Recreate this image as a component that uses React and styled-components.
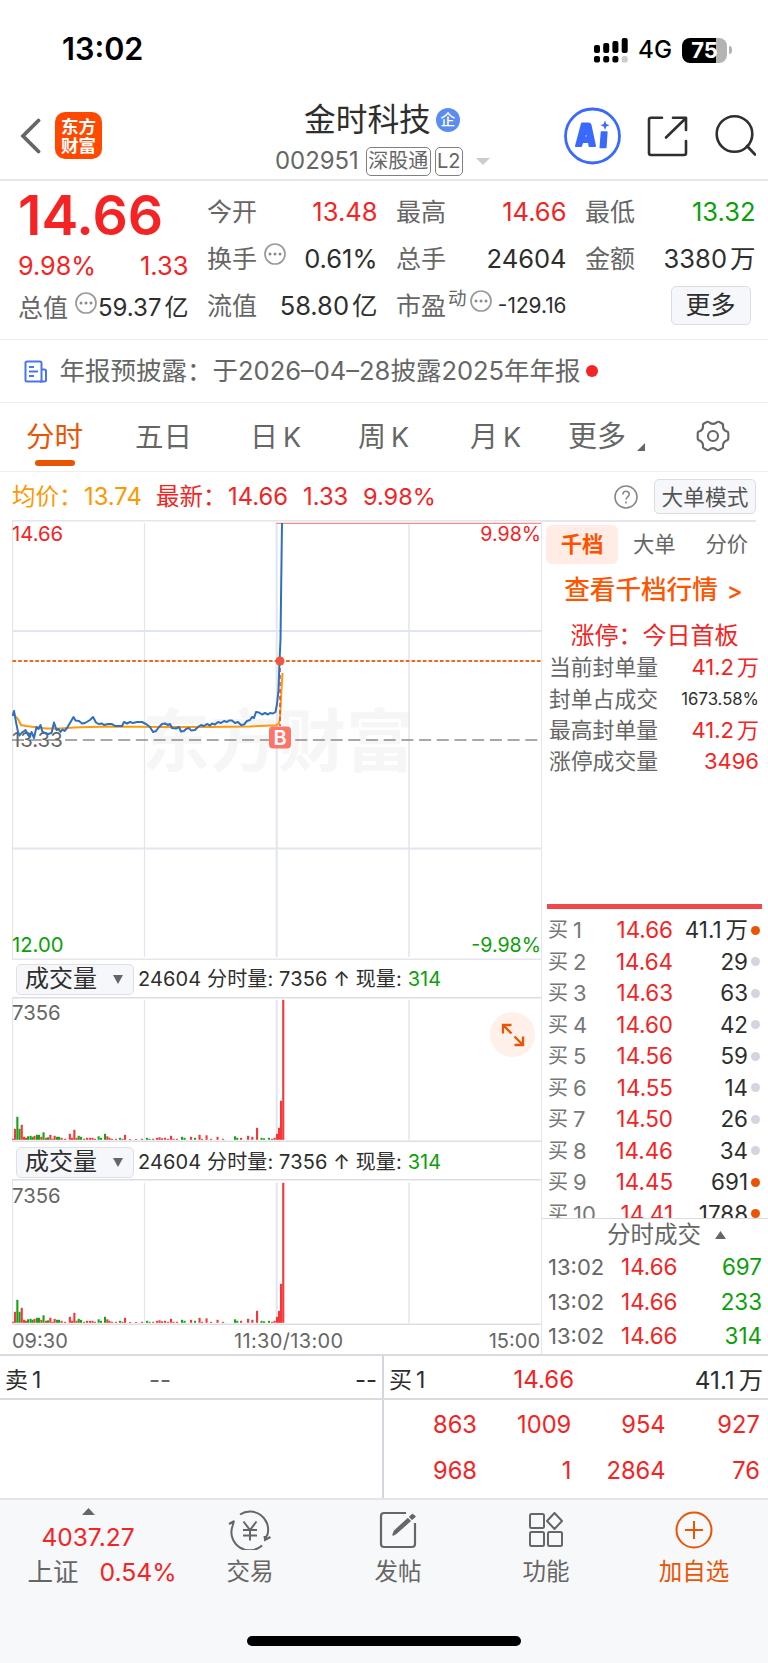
import React from "react";
import styled, { createGlobalStyle } from "styled-components";

const RED = "#f52323";
const GREEN = "#0aa00a";
const ORANGE = "#ea5504";
const GREY = "#666";
const DARK = "#2e2e2e";
const LINE = "#e4e6ec";

const Global = createGlobalStyle`
  * { box-sizing: border-box; }
  body {
    margin: 0;
    background: #fff;
    color: ${DARK};
    font-family: "Inter", "Noto Sans CJK SC", sans-serif;
    font-weight: 380;
  }
  svg { display: block; flex: none; }
`;

const Page = styled.div`
  width: 768px;
  height: 1663px;
  display: flex;
  flex-direction: column;
  overflow: hidden;
  background: #fff;
`;

const Txt = styled.span`
  display: block;
  white-space: pre;
  flex: none;
  font-size: ${(p) => p.$s || 24}px;
  line-height: ${(p) => p.$lh || 30}px;
  color: ${(p) => p.$c || "inherit"};
  font-weight: ${(p) => p.$w || 380};
  letter-spacing: ${(p) => p.$ls || 0}px;
`;

const Tail = styled.span`
  margin-left: ${(p) => p.$gap || 3}px;
  color: ${(p) => p.$c || "inherit"};
  font-size: ${(p) => (p.$s ? `${p.$s}px` : "inherit")};
`;

/* a figure whose counting unit is set off by a thin gap */
const Figure = ({ children, gap, ...rest }) => {
  const m = /^(.+)([万亿])$/.exec(children);
  return (
    <Txt {...rest}>
      {m ? m[1] : children}
      {m && <Tail $gap={gap}>{m[2]}</Tail>}
    </Txt>
  );
};

/* status bar */
const StatusBar = styled.header`
  height: 98px;
  padding: 34px 36px 0 62px;
  display: flex;
  align-items: flex-start;
  color: #000;
`;
const StatusIcons = styled.div`
  margin-left: auto;
  display: flex;
  align-items: center;
  gap: 10px;
  padding-top: 1px;
`;
const Battery = styled.div`
  width: 45px;
  height: 25px;
  border-radius: 8px;
  background: linear-gradient(90deg, #000 75%, #b3b3b3 75%);
  color: #fff;
  display: flex;
  align-items: center;
  justify-content: center;
`;
const BatteryGroup = styled.div`
  display: flex;
  align-items: center;
  gap: 2px;
`;
const Nub = styled.i`
  width: 3px;
  height: 8px;
  border-radius: 0 4px 4px 0;
  background: #b3b3b3;
`;

/* title bar */
const TitleBar = styled.div`
  height: 83px;
  border-bottom: 2px solid #e8e8e8;
  display: grid;
  grid-template-columns: 258px 250px 1fr;
`;
const TitleLeft = styled.div`
  display: flex;
  align-items: center;
  padding: 0 0 6px 20px;
  gap: 14px;
`;
const Logo = styled.div`
  width: 47px;
  height: 47px;
  border-radius: 10px;
  background: #ff4800;
  color: #fff;
  display: flex;
  flex-direction: column;
  align-items: center;
  justify-content: center;
`;
const TitleMid = styled.div`
  display: flex;
  flex-direction: column;
  padding-top: 3px;
`;
const TitleLine = styled.div`
  display: flex;
  align-items: center;
  height: 38px;
  padding-left: 46px;
  gap: 5px;
`;
const Badge = styled.div`
  width: 24px;
  height: 24px;
  border-radius: 50%;
  background: #5b8cf0;
  color: #fff;
  display: flex;
  align-items: center;
  justify-content: center;
`;
const CodeLine = styled.div`
  display: flex;
  align-items: center;
  margin-top: 7px;
  padding-left: 17px;
  height: 30px;
  > svg { margin-left: 13px; }
`;
const Tag = styled.div`
  height: 29px;
  border: 1.5px solid #808080;
  border-radius: 5px;
  width: ${(p) => p.$w}px;
  margin-left: ${(p) => p.$ml}px;
  flex: none;
  display: flex;
  align-items: center;
  justify-content: center;
`;
const TitleRight = styled.div`
  display: flex;
  align-items: center;
  padding: 0 12px 5px 0;
  justify-content: flex-end;
`;

/* quote panel */
const Quote = styled.section`
  height: 159px;
  border-bottom: 1.5px solid #efeff1;
  padding: 7px 12px 0 18px;
  display: grid;
  grid-template-columns: repeat(4, 170.5px);
  column-gap: 18.5px;
`;
const QuoteCol = styled.div`
  display: flex;
  flex-direction: column;
`;
const QuoteRow = styled.div`
  height: ${(p) => p.$h || 47.3}px;
  display: flex;
  align-items: center;
  justify-content: space-between;
`;
const LabelGroup = styled.div`
  display: flex;
  align-items: center;
  svg { margin: 0 0 10px ${(p) => p.$gap ?? 6}px; }
  sup { font-size: 18.5px; line-height: 20px; margin: 0 -4px 17px 2px; color: ${GREY}; }
`;
const Btn = styled.button`
  border: 1.5px solid #dcdde3;
  background: #f6f7fa;
  border-radius: 5px;
  padding: 0;
  width: ${(p) => p.$w}px;
  height: ${(p) => p.$h}px;
  display: flex;
  align-items: center;
  justify-content: center;
  font-family: inherit;
`;
const ButtonRow = styled.div`
  height: 45px;
  display: flex;
  align-items: center;
  justify-content: flex-end;
  padding-right: 5px;
`;

/* notice */
const Notice = styled.div`
  height: 63px;
  border-bottom: 1.5px solid #efeff1;
  display: flex;
  align-items: center;
  padding-left: 24px;
`;
const NoticeText = styled(Txt)`
  margin-left: 12.5px;
`;
const RedDot = styled.i`
  width: 12px;
  height: 12px;
  margin-left: 5px;
  border-radius: 50%;
  background: ${RED};
`;

/* period tabs */
const Tabs = styled.nav`
  height: 69px;
  border-bottom: 1.5px solid #efeff1;
  display: flex;
  padding-left: 26px;
`;
const Tab = styled.div`
  width: ${(p) => p.$w}px;
  height: 100%;
  padding-top: ${(p) => p.$pt || 14}px;
  display: flex;
  flex-direction: column;
  color: ${(p) => (p.$on ? ORANGE : GREY)};
`;
const Underline = styled.i`
  width: 40px;
  height: 6px;
  margin: 3px 0 0 9px;
  border-radius: 3px;
  background: ${ORANGE};
`;
const MoreTab = styled.div`
  display: flex;
  align-items: flex-end;
  gap: 11px;
`;

/* average price row */
const AvgRow = styled.div`
  height: 49px;
  display: flex;
  align-items: center;
  padding: 0 12px 0 12px;
`;
const AvgPart = styled(Txt)`
  width: ${(p) => p.$wd}px;
`;
const AvgTools = styled.div`
  margin-left: auto;
  display: flex;
  align-items: center;
  gap: 16px;
`;

/* main area */
const Main = styled.div`
  display: flex;
  height: 834px;
  margin-top: -1px;
`;
const Left = styled.div`
  width: 542px;
  padding-left: 12px;
  border-right: 1.5px solid ${LINE};
  display: flex;
  flex-direction: column;
`;
const VolHead = styled.div`
  height: ${(p) => p.$h}px;
  display: flex;
  align-items: center;
  padding: ${(p) => p.$pt}px 0 0 4px;
  gap: 4px;
`;
const Select = styled.div`
  width: 118px;
  height: 31px;
  border: 1.5px solid #dfe0e5;
  border-radius: 5px;
  background: #f6f7fa;
  display: flex;
  align-items: center;
  justify-content: space-between;
  padding: 0 10px 0 8px;
`;
const VolWrap = styled.div`
  position: relative;
`;
const Expand = styled.div`
  position: absolute;
  right: 6px;
  top: 15px;
  width: 45px;
  height: 45px;
  border-radius: 50%;
  background: #fff0ea;
  display: flex;
  align-items: center;
  justify-content: center;
`;
const AxisRow = styled.div`
  height: 29px;
  display: grid;
  grid-template-columns: 222px 1fr auto;
  align-items: center;
  padding: 1px 1px 0 0;
  color: ${GREY};
`;

const Right = styled.aside`
  width: 226px;
  display: flex;
  flex-direction: column;
`;
const TopRule = styled.i`
  height: 1.5px;
  width: 214px;
  background: ${LINE};
`;
const DepthTabs = styled.div`
  display: flex;
  margin: 3px 0 0 4px;
  height: 39px;
  color: #555;
`;
const DepthTab = styled.div`
  width: ${(p) => (p.$on ? 72 : 72.5)}px;
  border-radius: 6px;
  background: ${(p) => (p.$on ? "#ffece4" : "transparent")};
  color: ${(p) => (p.$on ? "#ff5000" : "#666")};
  display: flex;
  align-items: center;
  justify-content: center;
`;
const Centered = styled.div`
  height: ${(p) => p.$h}px;
  display: flex;
  align-items: center;
  justify-content: center;
  padding: ${(p) => p.$pt || 0}px ${(p) => p.$pr || 0}px 0 0;
`;
const StatRow = styled.div`
  height: 31.4px;
  padding: 0 9px 0 7px;
  display: flex;
  align-items: center;
  justify-content: space-between;
`;
const RedBar = styled.i`
  height: 5px;
  width: 215px;
  margin: 126.5px 0 6px 5px;
  background: #ef4a4a;
`;
const Book = styled.div`
  height: 304px;
  overflow: hidden;
  border-bottom: 1.5px solid #d8dbe2;
`;
const BookRow = styled.div`
  height: 31.5px;
  display: grid;
  grid-template-columns: 25px 36px 64px 75px 13px;
  align-items: center;
  padding-left: 6px;
  > :nth-child(3), > :nth-child(4) { text-align: right; }
`;
const Dot = styled.i`
  width: 9px;
  height: 9px;
  margin-left: 3px;
  border-radius: 50%;
  background: ${(p) => (p.$hot ? ORANGE : "#d3d6de")};
`;
const TradesHead = styled.div`
  height: 31px;
  display: flex;
  align-items: center;
  gap: 14px;
  padding: 2px 0 0 65px;
`;
const TradeRow = styled.div`
  height: 34.5px;
  display: grid;
  grid-template-columns: 56px 73.5px 1fr;
  align-items: center;
  padding: 1px 6px 0 6px;
  > :not(:first-child) { text-align: right; }
`;

/* level-one strip */
const Strip = styled.div`
  height: 46px;
  border-top: 2px solid #d9dbe1;
  border-bottom: 2px solid #d9dbe1;
  display: grid;
  grid-template-columns: 384px 384px;
`;
const Side = styled.div`
  display: grid;
  grid-template-columns: ${(p) => p.$cols};
  align-items: center;
  padding: 6px 5px 0 5px;
  border-right: ${(p) => (p.$div ? "2px solid #d3d6df" : "0")};
  > :last-child { text-align: right; }
`;
const Queue = styled.div`
  height: 100px;
  display: grid;
  grid-template-columns: 384px 384px;
  border-bottom: 2px solid #e4e5e8;
`;
const QueueBlank = styled.div`
  border-right: 2px solid #d3d6df;
`;
const QueueGrid = styled.div`
  display: grid;
  grid-template-columns: 93px repeat(3, 94.3px);
  grid-auto-rows: 46px;
  align-items: center;
  padding-top: 2px;
  text-align: right;
`;

/* bottom navigation */
const Nav = styled.footer`
  flex: 1;
  background: #f7f8fa;
  display: flex;
  flex-direction: column;
  align-items: center;
  justify-content: space-between;
  padding-bottom: 17px;
`;
const NavItems = styled.div`
  width: 100%;
  display: grid;
  grid-template-columns: 176px repeat(4, 148px);
`;
const IndexBox = styled.div`
  display: flex;
  flex-direction: column;
  align-items: center;
  padding-top: 8px;
  > span { margin-top: 7px; }
`;
const IndexLine = styled.div`
  display: flex;
  gap: 21px;
  margin: 5px 0 0 28px;
`;
const NavItem = styled.div`
  display: flex;
  flex-direction: column;
  align-items: center;
  padding-top: 10px;
  gap: 7px;
  color: ${(p) => (p.$hot ? ORANGE : GREY)};
`;
const HomeBar = styled.i`
  width: 274px;
  height: 10px;
  border-radius: 5px;
  background: #000;
`;

const InfoIcon = () => (
  <svg width="22" height="22" viewBox="0 0 22 22">
    <circle cx="11" cy="11" r="10" fill="none" stroke="#999" strokeWidth="1.7" />
    {[6, 11, 16].map((x) => (
      <circle key={x} cx={x} cy="11" r="1.5" fill="#8a8a8a" />
    ))}
  </svg>
);

const SignalIcon = () => (
  <svg width="34" height="25" viewBox="0 0 34 25">
    <rect x="0" y="7" width="6" height="8" rx="2" />
    <rect x="9.2" y="5" width="6" height="10" rx="2" />
    <rect x="18.4" y="3" width="6" height="12" rx="2" />
    <rect x="27.7" y="0" width="6" height="15" rx="2" />
    <rect x="0" y="18" width="6" height="6.5" rx="2" />
    <rect x="9.2" y="18" width="6" height="6.5" rx="2" />
    <rect x="18.4" y="18" width="6" height="6.5" rx="2" />
    <rect x="27.7" y="18" width="6" height="6.5" rx="2" fill="#ccc" />
  </svg>
);

const TitleIcons = () => (
  <svg width="196" height="60" viewBox="0 0 196 60" fill="none">
    <circle cx="32.5" cy="30" r="27" stroke="#3a69ff" strokeWidth="2.8" />
    <path
      fill="#3a69ff"
      stroke="#3a69ff"
      strokeWidth="2"
      strokeLinejoin="round"
      fillRule="evenodd"
      d="M22 17.500H28.500Q30 17.500 30.500 19L35 40H29.500L29 36H22.500L21 40H16ZM26.500 25L24 31.500H28Z"
    />
    <path
      fill="#3a69ff"
      stroke="#3a69ff"
      strokeWidth="1.6"
      strokeLinejoin="round"
      d="M41.500 26H46.800L45.800 41.500H40.300Z"
    />
    <path fill="#3a69ff" d="M45 14.500L46.300 17.900L49.500 19.200L46.300 20.500L45 24L43.700 20.500L40.500 19.200L43.700 17.900Z" />
    <g stroke="#2f2f2f" strokeWidth="2.6" strokeLinecap="round" strokeLinejoin="round">
      <path d="M102 11.800H91Q89 11.800 89 13.800V47Q89 49 91 49H124Q126 49 126 47V35" />
      <path d="M113 11.800H126V24M125.500 12.500L106 31.500" />
      <circle cx="174.500" cy="28" r="17.800" />
      <path d="M187 40L195 48.500" />
    </g>
  </svg>
);

const GearIcon = () => (
  <svg width="34" height="34" viewBox="0 0 34 34" fill="none" stroke="#666" strokeWidth="2.1" strokeLinejoin="round">
    <path d="M11 2.800Q13 2.500 14 4Q17 5.700 20 4Q21 2.500 23 2.800L26 4.500Q27.600 5.500 26.900 7.300Q27.200 11.200 30.400 12.300Q32.300 12.600 32.300 14.500V19Q32.300 21.200 30.400 21.500Q27.200 22.800 26.900 26.500Q27.600 28.400 26 29.400L23 31Q21 31.500 20 30Q17 28.300 14 30Q13 31.500 11 31L8 29.400Q6.400 28.400 7.100 26.500Q6.800 22.800 3.600 21.500Q1.700 21.200 1.700 19V14.500Q1.700 12.600 3.600 12.300Q6.800 11.200 7.100 7.300Q6.400 5.500 8 4.500Z" />
    <circle cx="17" cy="17" r="5" />
  </svg>
);

const NoticeIcon = () => (
  <svg width="23" height="23" viewBox="0 0 23 23" fill="none" stroke="#4a72f5" strokeWidth="2">
    <path d="M3 1.500H16Q17.500 1.500 17.500 3V21.500H3Q1.500 21.500 1.500 20V3Q1.500 1.500 3 1.500Z" />
    <path d="M17.500 9.500H20.500Q22 9.500 22 11V20Q22 21.500 20.500 21.500H16" />
    <path d="M5 7H10M5 11.500H14M5 16H10" strokeWidth="1.800" />
  </svg>
);

const PRICE_POINTS =
  "12.5,716 14,711 16,722 18,732 19.500,735.500 21.500,733 25.500,730 27.500,734 29.500,737 31.500,732 34,738 36.500,727 38.500,729 40.500,725 42.500,732 48,734 51.500,733 54,722.500 56.500,730 58.500,729 60.500,732 62.500,729.500 64.500,731 67,728 70,723 73.500,717 75.500,720.500 79,721 82,723.500 85,723 90,720 93,717 96,722.500 98.500,724 102,723.500 104,725 108,724 112,724 115,726 122,726 124,722 127,723.500 130,722 133,723 137,722 142,722 146,724 150,727 153,732 156,731 159,727 162,724 165,723.500 168,725 170,724 172,728 176,728.500 179,727 181,731.500 184,731 186,729 189,728 191,730.500 195,730 198,727 201,725 204,726 207,724 210,725.500 212,723.500 215,724.500 218,722 221,723 224,721 227,722 229,720.500 232,720.500 235,723 238,722 241,725 244,724.500 247,721 250,720 252,717 254,718 256,712 259,712.500 262,714.500 265,713 268,714.500 270,713 273,713.500 275.500,712 277,704 278.500,690 279.500,661 280.500,640 281,600 282,523";
const AVG_POINTS =
  "15,716 18,719 21,725 26,726 34,727 46,728.500 60,728.500 74,727.500 90,727 110,726.500 160,727 210,727 250,726.500 270,725.500 276,725.500 279,723 280,718 281.500,690 282.500,673";

const vLines = (y1, y2) => (
  <g stroke="#e1e5ee">
    <path d={`M12.500 ${y1 - 3}V${y2 + 3}`} strokeWidth="1.200" />
    <path d={`M144.500 ${y1}V${y2}`} strokeWidth="1.200" />
    <path d={`M276.700 ${y1}V${y2}`} strokeWidth="2" />
    <path d={`M409 ${y1}V${y2}`} strokeWidth="1.500" />
  </g>
);

const ChartText = styled.text`
  font-size: ${(p) => (p.$end ? 19.6 : 20.3)}px;
  fill: ${(p) => p.$c};
  text-anchor: ${(p) => (p.$end ? "end" : "start")};
`;
const Watermark = styled.text`
  font-size: 68px;
  font-weight: 700;
  fill: #f6f6f7;
`;
const MarkerText = styled.text`
  font-size: 20px;
  font-weight: 600;
  fill: #fff;
  text-anchor: middle;
`;

const PriceChart = () => (
  <svg width="529" height="440" viewBox="12 520 529 440" fill="none">
    <Watermark x="142" y="766">东方财富</Watermark>
    <path d="M12 520.700H541M12 959.200H541" stroke={LINE} strokeWidth="1.500" />
    {vLines(523, 957)}
    <path d="M12 631H541M12 848.500H541" stroke="#e1e5ee" strokeWidth="1.800" />
    <path d="M276 523.300H541" stroke="#fb8a8a" strokeWidth="1.200" />
    <path d="M12 740H541" stroke="#8c8c8c" strokeWidth="1.700" strokeDasharray="12 5.700" />
    <ChartText x="12" y="746.500" $c="#666">13.33</ChartText>
    <path d="M12.500 661H541" stroke="#f0661c" strokeWidth="2" strokeDasharray="3.600 2.100" />
    <polyline points={AVG_POINTS} stroke="#ff9a0a" strokeWidth="2" />
    <path d="M280 661V726" stroke="#f5453a" strokeWidth="1.600" strokeDasharray="4 3" />
    <polyline points={PRICE_POINTS} stroke="#2e6fc0" strokeWidth="2" strokeLinejoin="round" />
    <circle cx="280" cy="661" r="4.500" fill="#f0553f" />
    <rect x="269" y="726.500" width="22" height="22" rx="4" fill="#ff7468" />
    <MarkerText x="280" y="744.800">B</MarkerText>
    <ChartText x="12" y="540.500" $c={RED}>14.66</ChartText>
    <ChartText x="541" y="540.500" $c={RED} $end>9.98%</ChartText>
    <ChartText x="12" y="952" $c={GREEN}>12.00</ChartText>
    <ChartText x="541" y="952" $c={GREEN} $end>-9.98%</ChartText>
  </svg>
);

/* [x, height, up] for every minute with visible volume */
const BARS = [
  [13, 1, 1], [15, 11, 1], [17.300, 23, 0], [19.500, 11, 0], [21.700, 15, 1], [24, 3, 1], [26, 2, 1], [28, 3.500, 0],
  [30.500, 4, 0], [32.500, 3, 0], [34.500, 4, 1], [37, 5, 0], [39, 5, 0], [41.300, 3, 1], [43.500, 7.500, 0], [46, 2, 1],
  [48, 2.500, 0], [50.300, 5, 1], [52.500, 1, 1], [54.600, 4, 1], [57, 3, 0], [59, 3, 0], [61.500, 2, 1], [65, 1, 1],
  [69.800, 6, 1], [72, 2, 1], [74.300, 10, 1], [76.500, 2, 1], [78.700, 4, 0], [81, 3, 0], [84, 1, 1], [87, 2, 1], [90, 2, 1],
  [92.500, 2, 1], [95, 1, 1], [98.600, 3.500, 0], [101, 2, 0], [105, 6, 0], [107.300, 3.500, 1], [109.500, 2, 1], [112, 1, 1],
  [116, 1, 1], [120, 2, 0], [122.500, 1, 1], [125, 5, 1], [130, .8, 1], [136, .8, 1], [142, 1, 1], [147, 2, 0], [149.500, 1, 0],
  [153, 1, 1], [157, 2, 1], [159.500, 2.500, 1], [162, 1.500, 1], [165, 2, 1], [168, 1, 1], [171, 4, 1], [173.500, 1, 1],
  [177, 1, 1], [182, 3, 0], [184.500, 2, 0], [191, 3, 1], [195, 2, 0], [199.500, 5, 1], [202, 1, 1], [206.500, 4.500, 1],
  [211, 1, 1], [217.500, 3, 1], [223, 1, 1], [235, 3.500, 0], [237.200, 2, 0], [241, 2, 1], [248, 4, 1], [252.300, 3, 1],
  [257, 12, 1], [261.500, 2, 0], [264, 1.500, 0], [269, 2, 0], [272, 1, 1], [274.500, 2, 1], [277, 6, 1], [279, 12, 1],
  [281, 39, 1], [283.200, 140, 1],
];

const VolumeChart = ({ h }) => (
  <svg width="529" height={h} viewBox={`12 ${1142.200 - h} 529 ${h}`}>
    <path d={`M12 ${1143 - h}H541M12 1141.400H541`} stroke="#dcdee4" strokeWidth="1.600" />
    {vLines(1000, 1140)}
    <ChartText x="12" y="1020" $c="#666">7356</ChartText>
    {BARS.map(([x, v, up]) => (
      <rect key={x} x={x - 1} y={1140 - v} width="2.100" height={v} fill={up ? "#f93636" : "#15a415"} />
    ))}
  </svg>
);

const Triangle = ({ w, h, up, c = "#666" }) => (
  <svg width={w} height={h} viewBox="0 0 10 10" preserveAspectRatio="none">
    <path d={up ? "M0 10L5 0L10 10Z" : "M0 0H10L5 10Z"} fill={c} />
  </svg>
);

const Green = styled.span`
  color: ${GREEN};
`;

const VolumeHeader = ({ h, pt }) => (
  <VolHead $h={h} $pt={pt}>
    <Select>
      <Txt $s={24}>成交量</Txt>
      <Triangle w={10} h={9} />
    </Select>
    <Txt $s={20} $ls={0.12}>
      24604 分时量: 7356 ↑ 现量: <Green>314</Green>
    </Txt>
  </VolHead>
);

const COLUMNS = [
  [
    { label: "今开", value: "13.48", c: RED },
    { label: "换手", value: "0.61%", info: true },
    { label: "流值", value: "58.80亿" },
  ],
  [
    { label: "最高", value: "14.66", c: RED },
    { label: "总手", value: "24604" },
    { label: "市盈", sup: "动", value: "-129.16", info: true, s: 20.800 },
  ],
  [
    { label: "最低", value: "13.32", c: GREEN },
    { label: "金额", value: "3380万" },
  ],
];

const STATS = [
  ["当前封单量", "41.2万", RED, 22],
  ["封单占成交", "1673.58%", DARK, 16.700],
  ["最高封单量", "41.2万", RED, 22],
  ["涨停成交量", "3496", RED, 22],
];

const BIDS = [
  ["14.66", "41.1万", 1], ["14.64", "29"], ["14.63", "63"], ["14.60", "42"], ["14.56", "59"],
  ["14.55", "14"], ["14.50", "26"], ["14.46", "34"], ["14.45", "691", 1], ["14.41", "1788", 1],
];

const QUEUE = ["863", "1009", "954", "927", "968", "1", "2864", "76"];

const TradeIcon = () => (
  <svg width="46" height="40" viewBox="0 0 46 40" fill="none" stroke="#666" strokeWidth="2">
    <path d="M13 4.500A18.200 18.200 0 0 1 40.500 24.500L38 29M43.500 27L38 30L37.500 26" />
    <path d="M35 35.500A18.200 18.200 0 0 1 5.500 16L7 11M2 14L7.500 11" />
    <path d="M16.500 11.500L23 20L29.500 11.500M16 20H30M16 25.500H30M23 20V30.500" />
  </svg>
);
const PostIcon = () => (
  <svg width="38" height="40" viewBox="0 0 38 40" fill="none" stroke="#666" strokeWidth="2.200">
    <path d="M27 3H5Q2 3 2 6V34Q2 37 5 37H33Q36 37 36 34V13" />
    <path d="M33.500 4.500L36 6.500L17.500 23L14 25L15.500 21Z" fill="#666" strokeLinejoin="round" strokeWidth="1.500" />
    <path d="M28.500 6.500L33 11" stroke="#f7f8fa" strokeWidth="1.300" />
  </svg>
);
const GridIcon = () => (
  <svg width="36" height="40" viewBox="0 0 36 40" fill="none" stroke="#666" strokeWidth="2">
    <rect x="2" y="4" width="14" height="14" rx="1.500" />
    <path d="M26.500 3L34 11L26.500 19L19 11Z" strokeLinejoin="round" />
    <rect x="2" y="22" width="14" height="14" rx="1.500" />
    <rect x="20" y="22" width="14" height="14" rx="1.500" />
  </svg>
);
const AddIcon = () => (
  <svg width="40" height="40" viewBox="0 0 40 40" fill="none" stroke={ORANGE} strokeWidth="2">
    <circle cx="20" cy="20" r="17.500" />
    <path d="M11 20H29M20 11V29" />
  </svg>
);

const NAV = [
  ["交易", TradeIcon],
  ["发帖", PostIcon],
  ["功能", GridIcon],
  ["加自选", AddIcon],
];

const KTab = ({ w, children }) => (
  <Tab $w={w}>
    <Txt $s={28} $lh={40}>
      {children}
      <Tail $gap={5} $s={27}>K</Tail>
    </Txt>
  </Tab>
);

export default function App() {
  return (
    <Page>
      <Global />
      <StatusBar>
        <Txt $s={30.600} $w={600}>13:02</Txt>
        <StatusIcons>
          <SignalIcon />
          <Txt $s={24.200} $w={480}>4G</Txt>
          <BatteryGroup>
            <Battery>
              <Txt $s={22} $w={700} $lh={25}>75</Txt>
            </Battery>
            <Nub />
          </BatteryGroup>
        </StatusIcons>
      </StatusBar>

      <TitleBar>
        <TitleLeft>
          <svg width="21" height="36" viewBox="0 0 21 36">
            <path d="M18.500 2.500L3 18L18.500 33.500" fill="none" stroke="#666" strokeWidth="3.800" strokeLinecap="round" />
          </svg>
          <Logo>
            <Txt $s={17.500} $lh={19} $w={700}>东方</Txt>
            <Txt $s={17.500} $lh={19} $w={700}>财富</Txt>
          </Logo>
        </TitleLeft>
        <TitleMid>
          <TitleLine>
            <Txt $s={31.700} $lh={38}>金时科技</Txt>
            <Badge>
              <Txt $s={15} $lh={20} $w={500}>企</Txt>
            </Badge>
          </TitleLine>
          <CodeLine>
            <Txt $s={23.900} $c={GREY}>002951</Txt>
            <Tag $w={65} $ml={7}>
              <Txt $s={20} $lh={26} $c={GREY}>深股通</Txt>
            </Tag>
            <Tag $w={28} $ml={4}>
              <Txt $s={20} $lh={26} $c={GREY}>L2</Txt>
            </Tag>
            <Triangle w={14} h={7} c="#ccc" />
          </CodeLine>
        </TitleMid>
        <TitleRight>
          <TitleIcons />
        </TitleRight>
      </TitleBar>

      <Quote>
        <QuoteCol>
          <QuoteRow $h={54}>
            <Txt $s={55.300} $lh={54} $w={600} $c={RED}>14.66</Txt>
          </QuoteRow>
          <QuoteRow $h={48}>
            <Txt $s={25.200} $c={RED}>9.98%</Txt>
            <Txt $s={25.500} $c={RED}>1.33</Txt>
          </QuoteRow>
          <QuoteRow $h={35}>
            <LabelGroup $gap={7}>
              <Txt $s={25} $c={GREY}>总值</Txt>
              <InfoIcon />
            </LabelGroup>
            <Figure $s={24} gap={3}>59.37亿</Figure>
          </QuoteRow>
        </QuoteCol>
        {COLUMNS.map((col, i) => (
          <QuoteCol key={i}>
            {col.map((r) => (
              <QuoteRow key={r.label}>
                <LabelGroup $gap={7}>
                  <Txt $s={25} $c={GREY}>{r.label}</Txt>
                  {r.sup && <sup>{r.sup}</sup>}
                  {r.info && <InfoIcon />}
                </LabelGroup>
                <Figure $s={r.s || 25.500} $c={r.c}>{r.value}</Figure>
              </QuoteRow>
            ))}
            {i === 2 && (
              <ButtonRow>
                <Btn $w={80} $h={39}>
                  <Txt $s={25} $c={DARK}>更多</Txt>
                </Btn>
              </ButtonRow>
            )}
          </QuoteCol>
        ))}
      </Quote>

      <Notice>
        <NoticeIcon />
        <NoticeText $s={25.500} $c={GREY}>年报预披露：于2026–04–28披露2025年年报</NoticeText>
        <RedDot />
      </Notice>

      <Tabs>
        <Tab $on $w={109}>
          <Txt $s={28.500} $lh={40}>分时</Txt>
          <Underline />
        </Tab>
        <Tab $w={115}><Txt $s={28.500} $lh={40}>五日</Txt></Tab>
        <KTab w={108}>日</KTab>
        <KTab w={112}>周</KTab>
        <KTab w={98}>月</KTab>
        <Tab $w={128}>
          <MoreTab>
            <Txt $s={29} $lh={40}>更多</Txt>
            <svg width="8" height="14" viewBox="0 0 8 14"><path d="M8 0V8H0Z" fill="#666" /></svg>
          </MoreTab>
        </Tab>
        <Tab $w={34} $pt={16}><GearIcon /></Tab>
      </Tabs>

      <AvgRow>
        <AvgPart $s={23.500} $c="#ff9800" $wd={72}>均价：</AvgPart>
        <AvgPart $s={23.800} $c="#ff9800" $wd={72}>13.74</AvgPart>
        <AvgPart $s={23.500} $c={RED} $wd={72}>最新：</AvgPart>
        <AvgPart $s={23.800} $c={RED} $wd={75}>14.66</AvgPart>
        <AvgPart $s={23.800} $c={RED} $wd={60}>1.33</AvgPart>
        <Txt $s={23.500} $c={RED}>9.98%</Txt>
        <AvgTools>
          <svg width="24" height="24" viewBox="0 0 24 24" fill="none" stroke="#888" strokeWidth="1.600">
            <circle cx="12" cy="12" r="11" />
            <path d="M8.800 9.500Q9 6.300 12 6.300T15.200 9.300Q15.200 10.800 13.500 12Q12 13.200 12 14.500M12 16.500V18.500" />
          </svg>
          <Btn $w={102} $h={35}>
            <Txt $s={21.700} $c="#555">大单模式</Txt>
          </Btn>
        </AvgTools>
      </AvgRow>

      <Main>
        <Left>
          <PriceChart />
          <VolumeHeader h={37} pt={1.500} />
          <VolWrap>
            <VolumeChart h={145} />
            <Expand>
              <svg width="24" height="24" viewBox="0 0 24 24" fill="none" stroke={ORANGE} strokeWidth="2.300">
                <path d="M2 10.500V2H10.500M2 2L10.500 10.500M22 13.500V22H13.500M22 22L13.500 13.500" />
              </svg>
            </Expand>
          </VolWrap>
          <VolumeHeader h={37} pt={3} />
          <VolumeChart h={146} />
          <AxisRow>
            <Txt $s={20}>09:30</Txt>
            <Txt $s={20} $ls={0.35}>11:30/13:00</Txt>
            <Txt $s={20}>15:00</Txt>
          </AxisRow>
        </Left>

        <Right>
          <TopRule />
          <DepthTabs>
            <DepthTab $on><Txt $s={21.300} $w={600}>千档</Txt></DepthTab>
            <DepthTab><Txt $s={21.300}>大单</Txt></DepthTab>
            <DepthTab><Txt $s={21.300}>分价</Txt></DepthTab>
          </DepthTabs>
          <Centered $h={52} $pt={2} $pr={3}>
            <Txt $s={25.600} $w={450} $c="#ff5500">
              查看千档行情<Tail $gap={9} $s={24}>&gt;</Tail>
            </Txt>
          </Centered>
          <Centered $h={36} $pt={4} $pr={1}><Txt $s={24} $c={RED}>涨停：今日首板</Txt></Centered>
          {STATS.map(([label, value, c, s]) => (
            <StatRow key={label}>
              <Txt $s={21.800} $c={GREY}>{label}</Txt>
              <Figure $s={s} $c={c}>{value}</Figure>
            </StatRow>
          ))}
          <RedBar />
          <Book>
            {BIDS.map(([price, vol, hot], i) => (
              <BookRow key={price}>
                <Txt $s={20} $c="#777">买</Txt>
                <Txt $s={22} $c="#777">{i + 1}</Txt>
                <Txt $s={22.400} $c={RED}>{price}</Txt>
                <Figure $s={22.400} gap={4}>{vol}</Figure>
                <Dot $hot={hot} />
              </BookRow>
            ))}
          </Book>
          <TradesHead>
            <Txt $s={23.500} $c={GREY}>分时成交</Txt>
            <Triangle w={11} h={8} up />
          </TradesHead>
          {["697", "233", "314"].map((v) => (
            <TradeRow key={v}>
              <Txt $s={22} $c={GREY}>13:02</Txt>
              <Txt $s={22.400} $c={RED}>14.66</Txt>
              <Txt $s={22.400} $c={GREEN}>{v}</Txt>
            </TradeRow>
          ))}
        </Right>
      </Main>

      <Strip>
        <Side $cols="144px 1fr 60px" $div>
          <Txt $s={23}>卖<Tail $gap={4}>1</Tail></Txt>
          <Txt $s={24} $c={GREY}>--</Txt>
          <Txt $s={24}>--</Txt>
        </Side>
        <Side $cols="124.5px 1fr 100px">
          <Txt $s={23}>买<Tail $gap={4}>1</Tail></Txt>
          <Txt $s={24} $c={RED}>14.66</Txt>
          <Figure $s={24.300} gap={4}>41.1万</Figure>
        </Side>
      </Strip>
      <Queue>
        <QueueBlank />
        <QueueGrid>
          {QUEUE.map((q) => (
            <Txt key={q} $s={23.700} $c={RED}>{q}</Txt>
          ))}
        </QueueGrid>
      </Queue>

      <Nav>
        <NavItems>
          <IndexBox>
            <Triangle w={13} h={7} up />
            <Txt $s={24.500} $lh={30} $c={RED}>4037.27</Txt>
            <IndexLine>
              <Txt $s={25.500} $c={GREY}>上证</Txt>
              <Txt $s={24.800} $c={RED}>0.54%</Txt>
            </IndexLine>
          </IndexBox>
          {NAV.map(([label, Icon]) => (
            <NavItem key={label} $hot={label === "加自选"}>
              <Icon />
              <Txt $s={23.500}>{label}</Txt>
            </NavItem>
          ))}
        </NavItems>
        <HomeBar />
      </Nav>
    </Page>
  );
}
